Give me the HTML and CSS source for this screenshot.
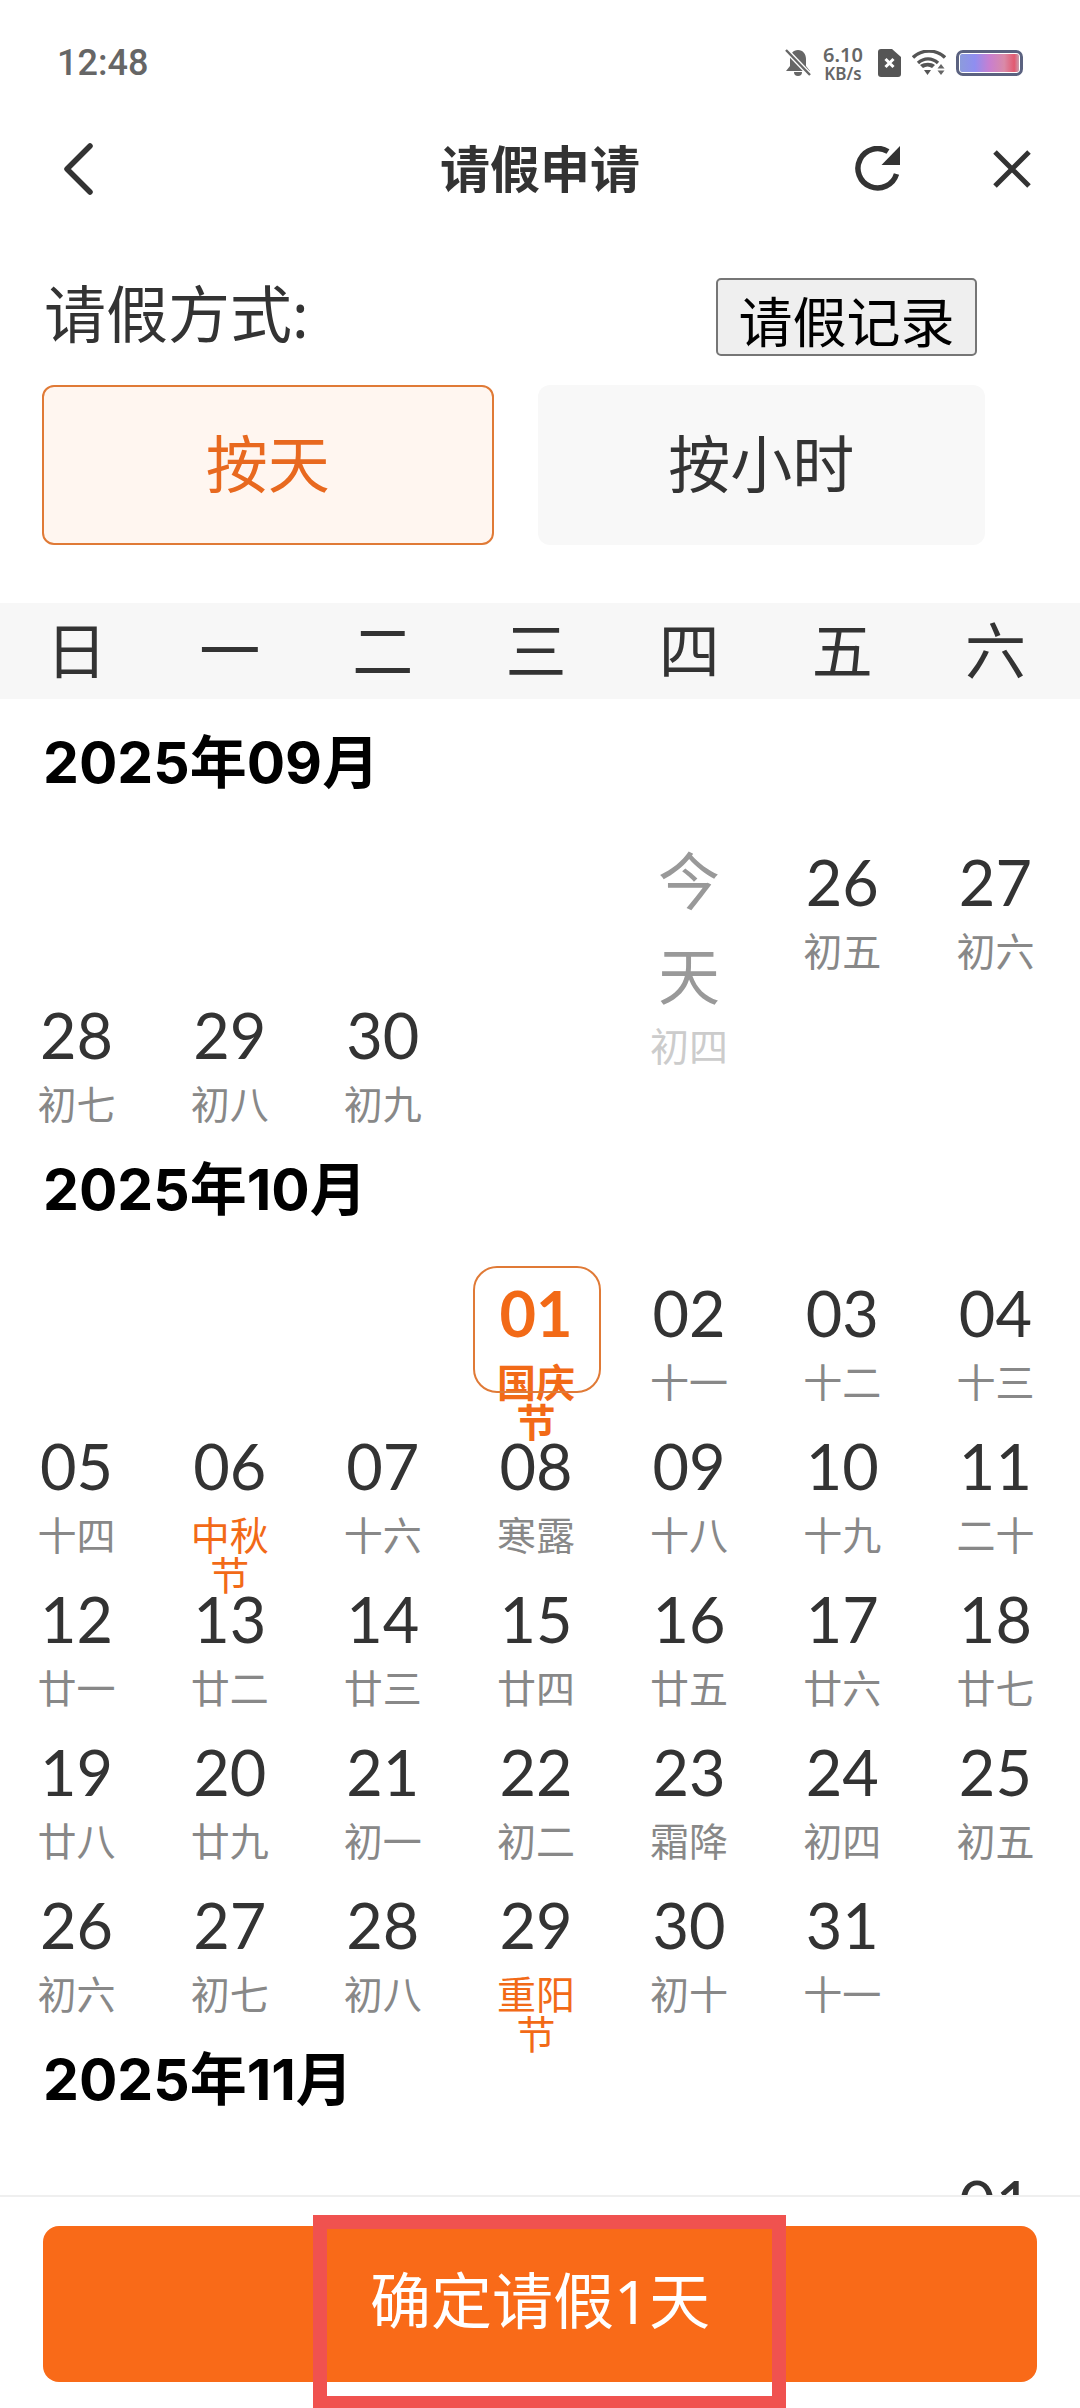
FILE: index.html
```html
<!DOCTYPE html>
<html lang="zh-CN">
<head>
  <meta charset="UTF-8" />
  <title>请假申请</title>
  <link rel="stylesheet" href="styles.css">
</head>
<body>
<div class="page">

  <!-- status bar -->
  <div class="status">
    <span class="time">12:48</span>
    <div class="status-icons">
      <svg class="ic-bell" width="26" height="28" viewBox="0 0 26 28">
        <path d="M13 1c5 0 8 4 8 9v7l4 5H1l4-5v-7c0-5 3-9 8-9z" fill="#666"/>
        <path d="M9 23a4 4 0 0 0 8 0z" fill="#666"/>
        <path d="M2 2l23 24" stroke="#fff" stroke-width="5"/>
        <path d="M1 1l24 25" stroke="#666" stroke-width="2.4"/>
      </svg>
      <div class="speed"><b>6.10</b><span>KB/s</span></div>
      <svg class="ic-sim" width="23" height="28" viewBox="0 0 23 28">
        <path d="M3 0h11l9 8v17a3 3 0 0 1-3 3H3a3 3 0 0 1-3-3V3a3 3 0 0 1 3-3z" fill="#555"/>
        <path d="M7.500 10l8 8M15.500 10l-8 8" stroke="#fff" stroke-width="3"/>
      </svg>
      <svg class="ic-wifi" width="34" height="26" viewBox="0 0 34 26">
        <g fill="none" stroke="#555" stroke-width="3.4">
          <path d="M1 7.500c9-8.500 23-8.500 32 0"/>
          <path d="M6 13c6-5.500 14-5.500 20 0"/>
        </g>
        <path d="M8 15c5-3 11-3 15 0l-3 3c-3-2-6-2-9 0z" fill="#555"/>
        <path d="M12 20h7l-3.500 5z" fill="#555"/>
        <path d="M29 14l3.500 4.500h-7zM25.500 20.500h7l-3.500 4.500z" fill="#666"/>
      </svg>
      <div class="battery"><div class="battery-fill"></div></div>
    </div>
  </div>

  <!-- nav -->
  <div class="nav">
    <svg class="back" width="30" height="52" viewBox="0 0 30 52">
      <path d="M27 3L4 26l23 23" fill="none" stroke="#333" stroke-width="5.500" stroke-linecap="round" stroke-linejoin="round"/>
    </svg>
    <div class="nav-title">请假申请</div>
    <div class="nav-actions">
      <svg width="46" height="46" viewBox="0 0 46 46">
        <path d="M33 5.500A19.700 19.700 0 1 0 41.500 28" fill="none" stroke="#333" stroke-width="5.500"/>
        <path d="M45 0v19H26.500z" fill="#333"/>
      </svg>
      <svg width="38" height="38" viewBox="0 0 38 38">
        <path d="M2 2l34 34M36 2L2 36" fill="none" stroke="#333" stroke-width="5"/>
      </svg>
    </div>
  </div>

  <!-- leave type -->
  <div class="type-row">
    <span class="type-label">请假方式:</span>
    <button class="record-btn">请假记录</button>
  </div>
  <div class="toggle">
    <div class="toggle-item active">按天</div>
    <div class="toggle-item">按小时</div>
  </div>

  <div class="week">
    <span>日</span><span>一</span><span>二</span><span>三</span><span>四</span><span>五</span><span>六</span>
  </div>

  <!-- calendar -->
  <div class="calendar">
    <div class="month-title">2025年09月</div>
    <div class="days">
      <div class="day"></div><div class="day"></div><div class="day"></div><div class="day"></div>
      <div class="day today"><div class="num">今天</div><div class="lunar">初四</div></div>
      <div class="day"><div class="num">26</div><div class="lunar">初五</div></div>
      <div class="day"><div class="num">27</div><div class="lunar">初六</div></div>
      <div class="day"><div class="num">28</div><div class="lunar">初七</div></div>
      <div class="day"><div class="num">29</div><div class="lunar">初八</div></div>
      <div class="day"><div class="num">30</div><div class="lunar">初九</div></div>
    </div>

    <div class="month-title">2025年10月</div>
    <div class="days">
      <div class="day"></div><div class="day"></div><div class="day"></div>
      <div class="day selected"><div class="num">01</div><div class="lunar">国庆节</div></div>
      <div class="day"><div class="num">02</div><div class="lunar">十一</div></div>
      <div class="day"><div class="num">03</div><div class="lunar">十二</div></div>
      <div class="day"><div class="num">04</div><div class="lunar">十三</div></div>
      <div class="day"><div class="num">05</div><div class="lunar">十四</div></div>
      <div class="day holiday"><div class="num">06</div><div class="lunar">中秋节</div></div>
      <div class="day"><div class="num">07</div><div class="lunar">十六</div></div>
      <div class="day"><div class="num">08</div><div class="lunar">寒露</div></div>
      <div class="day"><div class="num">09</div><div class="lunar">十八</div></div>
      <div class="day"><div class="num">10</div><div class="lunar">十九</div></div>
      <div class="day"><div class="num">11</div><div class="lunar">二十</div></div>
      <div class="day"><div class="num">12</div><div class="lunar">廿一</div></div>
      <div class="day"><div class="num">13</div><div class="lunar">廿二</div></div>
      <div class="day"><div class="num">14</div><div class="lunar">廿三</div></div>
      <div class="day"><div class="num">15</div><div class="lunar">廿四</div></div>
      <div class="day"><div class="num">16</div><div class="lunar">廿五</div></div>
      <div class="day"><div class="num">17</div><div class="lunar">廿六</div></div>
      <div class="day"><div class="num">18</div><div class="lunar">廿七</div></div>
      <div class="day"><div class="num">19</div><div class="lunar">廿八</div></div>
      <div class="day"><div class="num">20</div><div class="lunar">廿九</div></div>
      <div class="day"><div class="num">21</div><div class="lunar">初一</div></div>
      <div class="day"><div class="num">22</div><div class="lunar">初二</div></div>
      <div class="day"><div class="num">23</div><div class="lunar">霜降</div></div>
      <div class="day"><div class="num">24</div><div class="lunar">初四</div></div>
      <div class="day"><div class="num">25</div><div class="lunar">初五</div></div>
      <div class="day"><div class="num">26</div><div class="lunar">初六</div></div>
      <div class="day"><div class="num">27</div><div class="lunar">初七</div></div>
      <div class="day"><div class="num">28</div><div class="lunar">初八</div></div>
      <div class="day holiday"><div class="num">29</div><div class="lunar">重阳节</div></div>
      <div class="day"><div class="num">30</div><div class="lunar">初十</div></div>
      <div class="day"><div class="num">31</div><div class="lunar">十一</div></div>
    </div>

    <div class="month-title">2025年11月</div>
    <div class="days">
      <div class="day"></div><div class="day"></div><div class="day"></div><div class="day"></div><div class="day"></div><div class="day"></div>
      <div class="day"><div class="num">01</div><div class="lunar">十二</div></div>
    </div>
  </div>

  <!-- submit -->
  <div class="footer">
    <button class="submit">确定请假1天</button>
  </div>

  <!-- red annotation box -->
  <div class="mark"></div>
</div>
</body>
</html>
```

FILE: styles.css
```css
* {
  box-sizing: border-box;
}
body {
  margin: 0;
  background: #fff;
  font-family: "Noto Sans", "Noto Sans CJK SC", sans-serif;
  color: #333;
}
.page {
  position: relative;
  width: 1080px;
  height: 2408px;
  display: flex;
  flex-direction: column;
  overflow: hidden;
  background: #fff;
}

/* status bar */
.status {
  flex: none;
  height: 126px;
  padding: 0 57px;
  display: flex;
  align-items: center;
  justify-content: space-between;
}
.time {
  font-family: Roboto, sans-serif;
  font-size: 36px;
  font-weight: 500;
  color: #666;
}
.status-icons {
  display: flex;
  align-items: center;
}
.speed {
  display: flex;
  flex-direction: column;
  align-items: center;
  width: 44px;
  margin: 0 13px 0 10px;
  color: #666;
  line-height: 1;
}
.speed b {
  font-size: 20px;
  font-weight: 600;
  line-height: 20px;
}
.speed span {
  font-size: 17px;
  font-weight: 600;
  line-height: 17px;
}
.ic-wifi {
  margin: 0 10px 0 11px;
}
.battery {
  width: 67px;
  height: 26px;
  padding: 1px;
  border: 3px solid #5b6280;
  border-radius: 7px;
}
.battery-fill {
  height: 100%;
  border-radius: 2px;
  background: linear-gradient(90deg, #8c9bdc, #8f8ef0 25%, #c87fd0 50%, #d98aa8 75%, #e25a70 92%, #c9a0b0);
}

/* nav */
.nav {
  flex: none;
  height: 86px;
  padding: 0 49px;
  display: grid;
  grid-template-columns: 1fr auto 1fr;
  align-items: center;
}
.back {
  margin-left: 14px;
}
.nav-title {
  padding-bottom: 6px;
  font-size: 50px;
  font-weight: 700;
}
.nav-actions {
  display: flex;
  align-items: center;
  justify-content: flex-end;
  gap: 92px;
}

/* type */
.type-row {
  flex: none;
  height: 78px;
  margin-top: 66px;
  padding: 0 103px 0 44px;
  display: flex;
  align-items: center;
  justify-content: space-between;
}
.type-label {
  padding-bottom: 12px;
  font-size: 62px;
  color: #333;
}
.record-btn {
  width: 261px;
  height: 78px;
  padding: 0 0 4px;
  background: #efefef;
  border: 2px solid #767676;
  border-radius: 5px;
  font-family: inherit;
  font-size: 54px;
  color: #000;
}
.toggle {
  flex: none;
  height: 160px;
  margin-top: 29px;
  padding: 0 95px 0 42px;
  display: flex;
  gap: 44px;
}
.toggle-item {
  flex: 1;
  display: flex;
  align-items: center;
  justify-content: center;
  padding-bottom: 9px;
  background: #f8f8f8;
  border-radius: 12px;
  font-size: 62px;
  color: #333;
}
.toggle-item.active {
  background: #fff6f0;
  border: 2px solid #e07a36;
  color: #e8691f;
}
.week {
  flex: none;
  height: 96px;
  margin-top: 58px;
  padding: 0 8px 9px 0;
  background: #f7f7f7;
  display: grid;
  grid-template-columns: repeat(7, 1fr);
  align-items: center;
  justify-items: center;
  font-size: 61px;
  color: #333;
}

/* calendar */
.calendar {
  flex: 1;
  min-height: 0;
  overflow: hidden;
  padding: 15px 8px 0 0;
}
.month-title {
  height: 125px;
  padding: 3px 0 30px 43px;
  line-height: 92px;
  font-family: Inter, "Noto Sans CJK SC", sans-serif;
  font-size: 57px;
  font-weight: 700;
  color: #000;
}
.month-title:first-child {
  height: 121px;
}
.days {
  display: grid;
  grid-template-columns: repeat(7, 1fr);
  grid-auto-rows: 153px;
}
.day {
  position: relative;
  display: flex;
  flex-direction: column;
  align-items: center;
}
.num {
  width: 80px;
  margin-top: -1px;
  text-align: center;
  font-family: Lato, "Noto Sans CJK SC", sans-serif;
  font-size: 63px;
  line-height: 95px;
  color: #333;
}
.lunar {
  width: 80px;
  margin-top: 2px;
  text-align: center;
  font-size: 39px;
  line-height: 40px;
  color: #888;
}
.today .num {
  font-size: 62px;
  color: #999;
}
.today .lunar {
  color: #ccc;
}
.holiday .lunar {
  color: #f26a17;
}
.selected .num,
.selected .lunar {
  color: #f26a17;
  font-weight: 700;
}
.selected::before {
  content: "";
  position: absolute;
  top: 0;
  left: 14px;
  width: 124px;
  height: 123px;
  border: 2px solid #e07a36;
  border-radius: 24px;
}

/* footer */
.footer {
  flex: none;
  height: 213px;
  padding: 29px 43px 26px;
  background: #fff;
  border-top: 2px solid #efefef;
}
.submit {
  width: 100%;
  height: 100%;
  padding: 0 0 14px;
  background: #f96a18;
  border: none;
  border-radius: 16px;
  font-family: inherit;
  font-size: 61px;
  color: #fff;
}
.mark {
  position: absolute;
  left: 313px;
  top: 2215px;
  width: 473px;
  height: 195px;
  border: 14px solid #f0524f;
}
```
